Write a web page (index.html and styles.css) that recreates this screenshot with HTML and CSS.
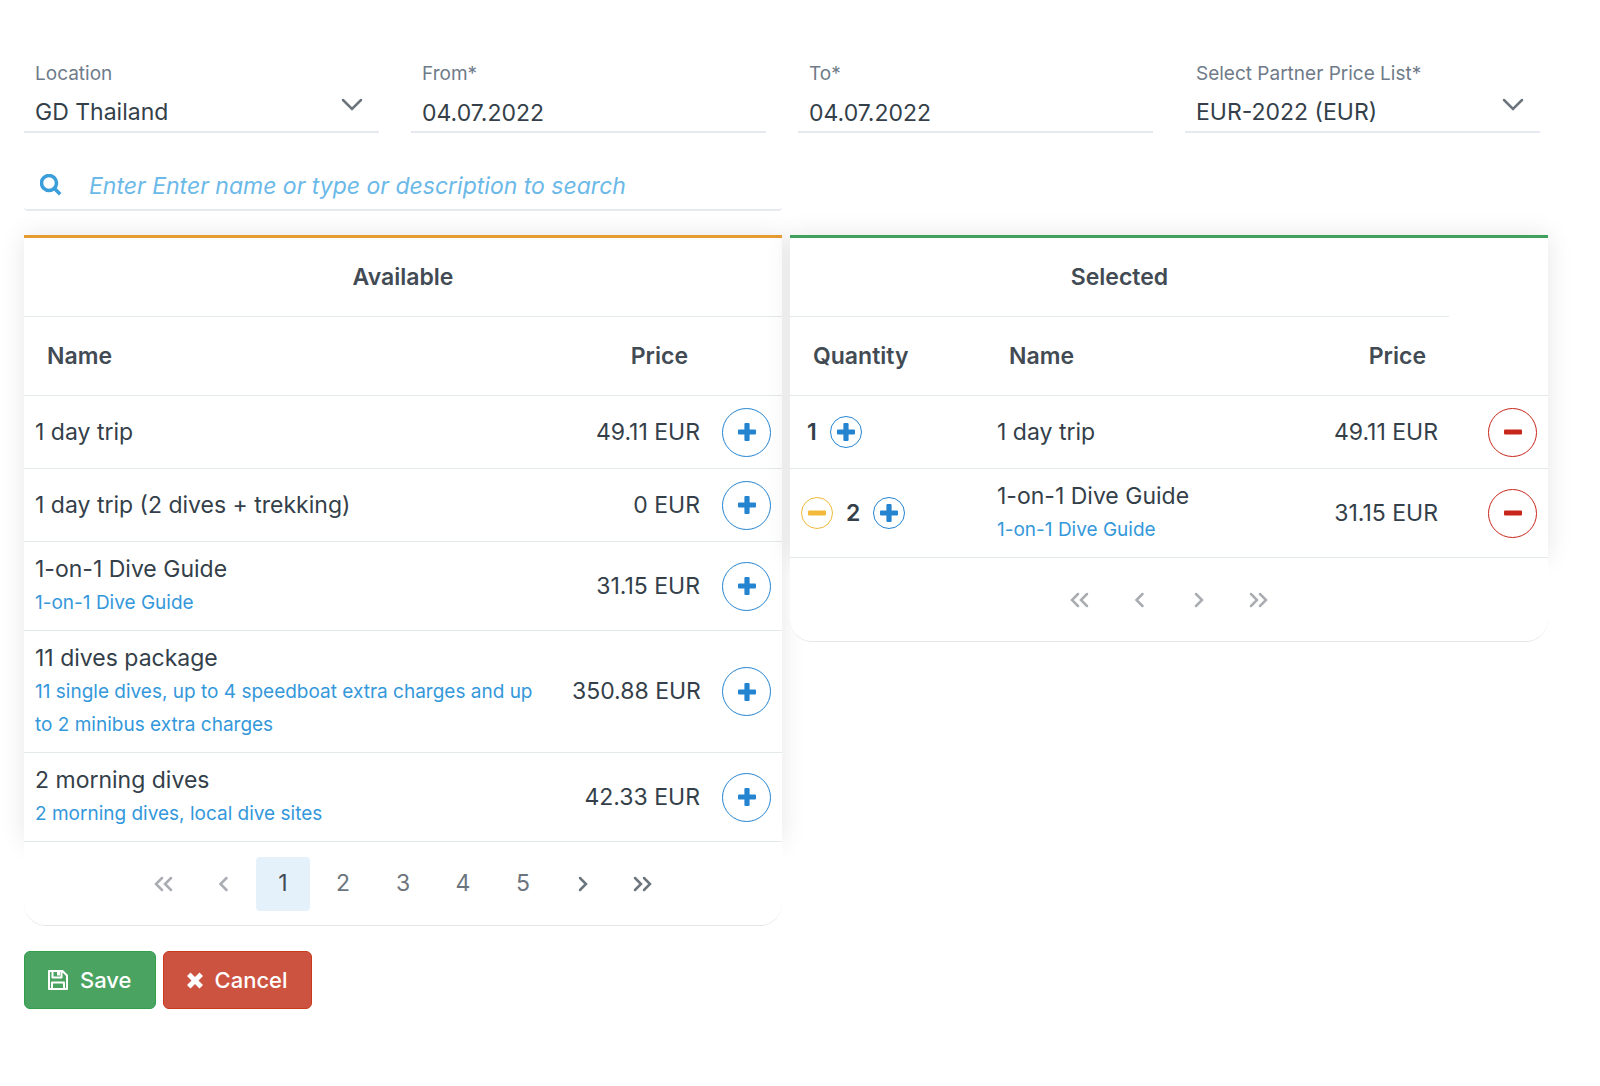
FILE: index.html
```html
<!DOCTYPE html>
<html lang="en">
<head>
<meta charset="utf-8">
<meta name="viewport" content="width=device-width, initial-scale=1">
<title>Partner price list</title>
<link rel="stylesheet" href="styles.css">
</head>
<body>
<svg class="sprite" aria-hidden="true">
  <symbol id="plus" viewBox="0 0 18 18"><path d="M7.4 0h3.2q1 0 1 1v5.4H17q1 0 1 1v3.2q0 1-1 1h-5.4V17q0 1-1 1H7.4q-1 0-1-1v-5.4H1q-1 0-1-1V7.4q0-1 1-1h5.4V1q0-1 1-1z"/></symbol>
  <symbol id="minus" viewBox="0 0 18 18"><rect y="6.5" width="18" height="5" rx="1"/></symbol>
  <symbol id="first" viewBox="0 0 20 16"><path d="M9 2 3 8l6 6M18 2l-6 6 6 6"/></symbol>
  <symbol id="prev" viewBox="0 0 20 16"><path d="M13.500 2l-6 6 6 6"/></symbol>
  <symbol id="next" viewBox="0 0 20 16"><path d="M7 2l6 6-6 6"/></symbol>
  <symbol id="last" viewBox="0 0 20 16"><path d="M2 2l6 6-6 6M11 2l6 6-6 6"/></symbol>
  <symbol id="chevron" viewBox="0 0 22 14"><path d="M2 2l9 9 9-9"/></symbol>
</svg>

<main class="page">
  <form class="filters">
    <div class="field">
      <label for="location">Location</label>
      <select id="location"><option>GD Thailand</option></select>
      <svg class="chevron"><use href="#chevron"/></svg>
    </div>
    <div class="field">
      <label for="from">From*</label>
      <input id="from" type="text" value="04.07.2022">
    </div>
    <div class="field">
      <label for="to">To*</label>
      <input id="to" type="text" value="04.07.2022">
    </div>
    <div class="field">
      <label for="pricelist">Select Partner Price List*</label>
      <select id="pricelist"><option>EUR-2022 (EUR)</option></select>
      <svg class="chevron"><use href="#chevron"/></svg>
    </div>
  </form>

  <div class="columns">
    <div class="search">
      <svg class="search-icon" viewBox="0 0 22 24"><circle cx="9" cy="9" r="7.500"/><path d="M14.200 14.200l6 6"/></svg>
      <input type="search" aria-label="Search" placeholder="Enter Enter name or type or description to search">
    </div>
  </div>

  <div class="columns">
    <section class="panel">
      <table class="available">
        <colgroup><col><col class="col-price"><col class="col-add"></colgroup>
        <thead>
          <tr><th colspan="3" class="title">Available</th></tr>
          <tr><th>Name</th><th class="price">Price</th><th></th></tr>
        </thead>
        <tbody>
          <tr><td>1 day trip</td><td class="price">49.11 EUR</td><td class="action"><button class="round add" aria-label="Add"><svg><use href="#plus"/></svg></button></td></tr>
          <tr><td>1 day trip (2 dives + trekking)</td><td class="price">0 EUR</td><td class="action"><button class="round add" aria-label="Add"><svg><use href="#plus"/></svg></button></td></tr>
          <tr><td>1-on-1 Dive Guide<span class="note">1-on-1 Dive Guide</span></td><td class="price">31.15 EUR</td><td class="action"><button class="round add" aria-label="Add"><svg><use href="#plus"/></svg></button></td></tr>
          <tr><td>11 dives package<span class="note">11 single dives, up to 4 speedboat extra charges and up to 2 minibus extra charges</span></td><td class="price">350.88 EUR</td><td class="action"><button class="round add" aria-label="Add"><svg><use href="#plus"/></svg></button></td></tr>
          <tr><td>2 morning dives<span class="note">2 morning dives, local dive sites</span></td><td class="price">42.33 EUR</td><td class="action"><button class="round add" aria-label="Add"><svg><use href="#plus"/></svg></button></td></tr>
        </tbody>
      </table>
      <nav class="pager" aria-label="Available pages">
        <button disabled aria-label="First"><svg><use href="#first"/></svg></button>
        <button disabled aria-label="Previous"><svg><use href="#prev"/></svg></button>
        <button class="current">1</button>
        <button>2</button>
        <button>3</button>
        <button>4</button>
        <button>5</button>
        <button aria-label="Next"><svg><use href="#next"/></svg></button>
        <button aria-label="Last"><svg><use href="#last"/></svg></button>
      </nav>
    </section>

    <section class="panel">
      <table class="selected">
        <colgroup><col class="col-quantity"><col><col class="col-price"><col class="col-remove"></colgroup>
        <thead>
          <tr><th colspan="3" class="title">Selected</th><th rowspan="2"></th></tr>
          <tr><th>Quantity</th><th>Name</th><th class="price">Price</th></tr>
        </thead>
        <tbody>
          <tr>
            <td><div class="quantity"><span>1</span><button class="round small add" aria-label="More"><svg><use href="#plus"/></svg></button></div></td>
            <td>1 day trip</td><td class="price">49.11 EUR</td>
            <td class="action"><button class="round remove" aria-label="Remove"><svg><use href="#minus"/></svg></button></td>
          </tr>
          <tr>
            <td><div class="quantity"><button class="round small less" aria-label="Less"><svg><use href="#minus"/></svg></button><span>2</span><button class="round small add" aria-label="More"><svg><use href="#plus"/></svg></button></div></td>
            <td>1-on-1 Dive Guide<span class="note">1-on-1 Dive Guide</span></td><td class="price">31.15 EUR</td>
            <td class="action"><button class="round remove" aria-label="Remove"><svg><use href="#minus"/></svg></button></td>
          </tr>
        </tbody>
      </table>
      <nav class="pager" aria-label="Selected pages">
        <button disabled aria-label="First"><svg><use href="#first"/></svg></button>
        <button disabled aria-label="Previous"><svg><use href="#prev"/></svg></button>
        <button disabled aria-label="Next"><svg><use href="#next"/></svg></button>
        <button disabled aria-label="Last"><svg><use href="#last"/></svg></button>
      </nav>
    </section>
  </div>

  <div class="buttons">
    <button class="save"><svg viewBox="0 0 20 20"><path class="line" d="M1 1h13.500L19 5.500V19H1zM4.500 1v6.500h9V1M4 19v-6.500h12V19"/><path d="M9 1h3v4.500H9z"/></svg>Save</button>
    <button class="cancel"><svg viewBox="2 0 16 20"><path d="M5.500 2.500 10 7l4.500-4.500L18 6l-4.500 4.500L18 15l-3.500 3.500L10 14l-4.500 4.500L2 15l4.500-4.500L2 6z"/></svg>Cancel</button>
  </div>
</main>
</body>
</html>
```
FILE: styles.css
```css
* { box-sizing: border-box; }

body {
  margin: 0;
  background: #fff;
  color: #343f4a;
  font: 23px/33px Inter, "Liberation Sans", sans-serif;
}

button, input, select { font: inherit; color: inherit; }
button { cursor: pointer; padding: 0; }
.sprite { display: none; }

.page { padding: 57px 52px 56px 24px; }

.filters {
  display: grid;
  grid-template-columns: repeat(4, 1fr);
  gap: 32px;
  padding-right: 8px;
}

.field { position: relative; border-bottom: 2px solid #e6e9ef; }
.field label {
  display: block;
  padding-left: 11px;
  font-size: 19px;
  color: #6f7b89;
}
.field input, .field select {
  display: block;
  width: 100%;
  height: 41px;
  padding: 6px 11px 2px;
  border: 0;
  background: none;
  appearance: none;
  outline: none;
}
.chevron {
  position: absolute;
  right: 16px;
  top: 41px;
  width: 22px;
  height: 14px;
  fill: none;
  stroke: #6c757d;
  stroke-width: 2.5;
  stroke-linecap: round;
  pointer-events: none;
}

.columns {
  display: grid;
  grid-template-columns: 1fr 1fr;
  gap: 8px;
  align-items: start;
}

.search {
  display: flex;
  align-items: center;
  gap: 27px;
  height: 48px;
  margin: 30px 0 24px;
  padding-left: 16px;
  border-bottom: 2px solid #e6e9ee;
  border-radius: 4px;
}
.search-icon {
  width: 22px;
  height: 24px;
  flex: none;
  fill: none;
  stroke: #3a9edb;
  stroke-width: 3.5;
}
.search input {
  flex: 1;
  min-width: 0;
  padding: 0;
  border: 0;
  background: none;
  outline: none;
  font-style: italic;
}
.search input::placeholder { color: #6bb9e8; opacity: 1; }

table {
  width: 100%;
  border-collapse: separate;
  border-spacing: 0;
  table-layout: fixed;
  border-top: 3px solid #e79c32;
  background: #fff;
  box-shadow: 0 0 24px rgba(0, 0, 0, .1);
}
.selected { border-top-color: #41a05d; }

.col-price { width: 150px; }
.col-add { width: 71px; }
.col-quantity { width: 196px; }
.col-remove { width: 99px; }

th, td {
  padding: 11px;
  border-bottom: 1px solid #e4e9ec;
  text-align: left;
}
th { height: 79px; padding: 11px 23px; font-weight: 600; color: #424b54; }
td { height: 73px; }
.title { text-align: center; }
.price { text-align: right; white-space: nowrap; }
td.action { padding-top: 0; padding-bottom: 0; text-align: right; }

.note { display: block; font-size: 19px; color: #3498db; }

.round {
  display: inline-flex;
  align-items: center;
  justify-content: center;
  width: 49px;
  height: 49px;
  border: 1px solid;
  border-radius: 50%;
  background: none;
  vertical-align: middle;
}
.round svg { width: 18px; height: 18px; fill: currentColor; }
.small { width: 32px; height: 32px; }
.add { color: #2584d0; }
.less { color: #f2b93b; }
.remove { color: #c8261b; }

.quantity { display: flex; align-items: center; gap: 7px; font-weight: 600; }
.quantity span { padding: 0 6px; }

.pager {
  position: relative;
  display: flex;
  justify-content: center;
  align-items: center;
  gap: 6px;
  height: 84px;
  border-bottom: 1px solid #e4e7ea;
  border-radius: 0 0 22px 22px;
  background: #fff;
}
.pager button {
  display: flex;
  align-items: center;
  justify-content: center;
  width: 54px;
  height: 54px;
  border: 0;
  border-radius: 4px;
  background: none;
  color: #6c757d;
}
.pager button:disabled { color: #a9adb2; }
.pager .current { background: #e4f1fb; color: #424b54; }
.pager svg {
  width: 20px;
  height: 16px;
  fill: none;
  stroke: currentColor;
  stroke-width: 2.5;
  stroke-linecap: round;
}

.buttons { display: flex; gap: 7px; margin-top: 25px; }
.buttons button {
  display: flex;
  align-items: center;
  gap: 12px;
  height: 58px;
  padding: 0 23px;
  border: 1px solid;
  border-radius: 6px;
  color: #fff;
  font-size: 22px;
  font-weight: 500;
}
.buttons svg { width: 20px; height: 20px; fill: #fff; }
.buttons .cancel svg { width: 16px; }
.buttons .line { fill: none; stroke: #fff; stroke-width: 2; stroke-linejoin: round; }
.buttons .save { background: #4aa360; border-color: #2f9e4d; }
.buttons .cancel { background: #cd5341; border-color: #c93a1e; }
```
